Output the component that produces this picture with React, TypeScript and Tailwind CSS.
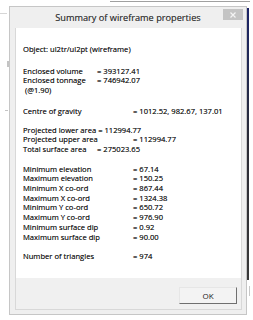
const rows: { label: string; value?: string; at?: "short" | "long" | "inline"; gap?: string }[] = [
  { label: "Object: ul2tr/ul2pt (wireframe)", gap: "h-[12px]" },
  { label: "Enclosed volume", value: "= 393127.41", at: "short" },
  { label: "Enclosed tonnage", value: "= 746942.07", at: "short" },
  { label: "\u00a0(@1.90)", gap: "h-[11px]" },
  { label: "Centre of gravity", value: "= 1012.52, 982.67, 137.01", at: "long", gap: "h-[9px]" },
  { label: "Projected lower area", value: "= 112994.77", at: "inline" },
  { label: "Projected upper area", value: "= 112994.77", at: "long" },
  { label: "Total surface area", value: "= 275023.65", at: "short", gap: "h-[10px]" },
  { label: "Minimum elevation", value: "= 67.14", at: "long" },
  { label: "Maximum elevation", value: "= 150.25", at: "long" },
  { label: "Minimum X co-ord", value: "= 867.44", at: "long" },
  { label: "Maximum X co-ord", value: "= 1324.38", at: "long" },
  { label: "Minimum Y co-ord", value: "= 650.72", at: "long" },
  { label: "Maximum Y co-ord", value: "= 976.90", at: "long" },
  { label: "Minimum surface dip", value: "= 0.92", at: "long" },
  { label: "Maximum surface dip", value: "= 90.00", at: "long", gap: "h-[10px]" },
  { label: "Number of triangles", value: "= 974", at: "long" },
];

function Row({ label, value, at }: { label: string; value?: string; at?: string }) {
  if (at === "inline") {
    return (
      <div className="flex whitespace-pre">
        <span>{label} </span>
        <span>{value}</span>
      </div>
    );
  }
  return (
    <div className="flex whitespace-pre">
      <span className={at === "short" ? "w-[74px] shrink-0" : at === "long" ? "w-[110px] shrink-0" : ""}>{label}</span>
      {value && <span>{value}</span>}
    </div>
  );
}

export default function App() {
  return (
    <div className="relative w-[253px] h-[320px] bg-white overflow-hidden font-['Open_Sans',sans-serif]">
      {/* stuff behind the dialog */}
      <div className="absolute top-[1px] left-[110px] w-[140px] h-px bg-[#a0a0a0]" />
      <div className="absolute top-[8px] left-[247px] w-[2px] h-[272px] bg-linear-to-b from-[#1c2468] via-[#2b2b35] to-[#3a3a3a]" />
      <div className="absolute top-[286px] left-[249px] w-px h-[10px] bg-[#c8c8c8]" />
      <div className="absolute top-[13px] left-0 w-[7px] h-px bg-[#d6d6d6]" />
      <div className="absolute top-[61px] left-[7px] w-[2px] h-[6px] bg-[#c4c4c4]" />
      <div className="absolute top-[110px] left-[5px] w-[3px] h-px bg-[#c4c4c4]" />

      <div className="ml-[9px] mt-[6px] w-[238px] h-[309px] border border-[#c6c6c6] bg-[#efefef] flex flex-col">
        <div className="relative h-[21px] flex items-center justify-center text-[9.2px] text-[#3a3a3a] [text-shadow:0_0_0.2px_#777]">
          Summary of wireframe properties
          <div className="absolute right-[3px] top-[2px] w-[20px] h-[11px] bg-[#c4c4c4] flex items-center justify-center">
            <svg width="6" height="6" viewBox="0 0 6 6">
              <path d="M0.5 0.5L5.5 5.5M5.5 0.5L0.5 5.5" stroke="#f4f4f4" strokeWidth="1.2" />
            </svg>
          </div>
        </div>

        <div className="ml-[5px] mr-[4px] flex-1 flex flex-col border-x border-b border-[#d8d8d8]">
          <div className="h-[250px] bg-white pt-[17px] pl-[7px] text-[7.6px] leading-[9.7px] text-[#1a1a1a] [text-shadow:0_0_0.2px_#666]">
            {rows.map((r) => (
              <div key={r.label}>
                <Row label={r.label} value={r.value} at={r.at} />
                {r.gap && <div className={r.gap} />}
              </div>
            ))}
          </div>
          <div className="flex-1 bg-[#f0f0f0] flex justify-end items-start pt-[9px] pr-[4px]">
            <button className="w-[58px] h-[17px] bg-[#f3f3f3] border border-t-[#e6e6e6] border-l-[#e6e6e6] border-r-[#6f6f6f] border-b-[#6f6f6f] text-[8px] text-[#1a1a1a] flex items-center justify-center">
              OK
            </button>
          </div>
        </div>
        <div className="h-[4px]" />
      </div>
    </div>
  );
}
